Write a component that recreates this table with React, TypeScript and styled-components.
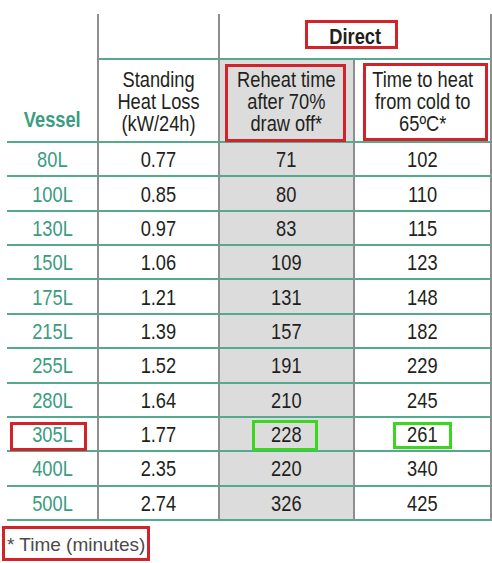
import React from "react";
import styled, { createGlobalStyle } from "styled-components";

const Global = createGlobalStyle`
  html, body { margin: 0; padding: 0; background: #ffffff; }
  body { font-family: "Liberation Sans", Arial, sans-serif; color: #231f20; }
`;

const LINE = "#55a98f";
const TEAL = "#3a9c80";
const GREYLINE = "#8e8e8e";
const SHADE = "#dcdcdc";
const RED = "#d2232a";
const LIME = "#3bd61f";

const Page = styled.div`
  padding: 14px 0 0 7px;
  width: 485px;
`;

const Table = styled.table`
  border-collapse: separate;
  border-spacing: 0;
  table-layout: fixed;
  width: 485px;
  font-size: 22px;
`;

const Cell = styled.td<{ $shade?: boolean; $teal?: boolean }>`
  position: relative;
  box-sizing: border-box;
  padding: 0;
  text-align: center;
  vertical-align: middle;
  line-height: 22px;
  font-weight: normal;
  background: ${(p) => (p.$shade ? SHADE : "transparent")};
  border-right: 2px solid ${GREYLINE};
  border-bottom: 2px solid ${LINE};
  color: ${(p) => (p.$teal ? TEAL : "#231f20")};
`;

const BodyCell = styled(Cell)`
  padding-top: 2px;
`;

const HeadCell = styled(Cell)`
  padding-top: 3px;
`;

const VesselHead = styled(Cell)`
  vertical-align: bottom;
  padding-bottom: 10px;
  font-weight: bold;
  color: ${TEAL};
`;

const DirectHead = styled(Cell)`
  font-weight: bold;
  padding-top: 2px;
`;

const Mark = styled.span<{ $color: string; $t: number; $r: number; $b: number; $l: number }>`
  position: absolute;
  top: ${(p) => p.$t}px;
  right: ${(p) => p.$r}px;
  bottom: ${(p) => p.$b}px;
  left: ${(p) => p.$l}px;
  border: 3px solid ${(p) => p.$color};
  pointer-events: none;
`;

const Label = styled.span`
  position: relative;
  display: inline-block;
  transform: scaleX(0.83);
  transform-origin: center;
  white-space: nowrap;
`;

const Footer = styled.div`
  margin: 5px 0 0 -5px;
  display: inline-block;
  box-sizing: border-box;
  height: 35px;
  padding: 0 2px 0 2px;
  border: 3px solid ${RED};
  font-size: 19px;
  line-height: 31px;
  color: #4a4a4a;
  white-space: nowrap;
`;

type Row = [string, string, string, string];

const rows: Row[] = [
  ["80L", "0.77", "71", "102"],
  ["100L", "0.85", "80", "110"],
  ["130L", "0.97", "83", "115"],
  ["150L", "1.06", "109", "123"],
  ["175L", "1.21", "131", "148"],
  ["215L", "1.39", "157", "182"],
  ["255L", "1.52", "191", "229"],
  ["280L", "1.64", "210", "245"],
  ["305L", "1.77", "228", "261"],
  ["400L", "2.35", "220", "340"],
  ["500L", "2.74", "326", "425"],
];

export default function App() {
  return (
    <>
      <Global />
      <Page>
        <Table>
          <colgroup>
            <col style={{ width: 92 }} />
            <col style={{ width: 121 }} />
            <col style={{ width: 135 }} />
            <col style={{ width: 137 }} />
          </colgroup>
          <thead>
            <tr style={{ height: 46 }}>
              <VesselHead as="th" rowSpan={2}>
                <Label>Vessel</Label>
              </VesselHead>
              <Cell as="th" />
              <DirectHead as="th" colSpan={2}>
                <Mark $color={RED} $t={6} $r={92} $b={9} $l={85} />
                <Label>Direct</Label>
              </DirectHead>
            </tr>
            <tr style={{ height: 83 }}>
              <HeadCell as="th">
                <Label>
                  Standing
                  <br />
                  Heat Loss
                  <br />
                  (kW/24h)
                </Label>
              </HeadCell>
              <HeadCell as="th" $shade>
                <Mark $color={RED} $t={4} $r={7} $b={-1} $l={5} />
                <Label>
                  Reheat time
                  <br />
                  after 70%
                  <br />
                  draw off*
                </Label>
              </HeadCell>
              <HeadCell as="th">
                <Mark $color={RED} $t={3} $r={2} $b={0} $l={8} />
                <Label>
                  Time to heat
                  <br />
                  from cold to
                  <br />
                  65ºC*
                </Label>
              </HeadCell>
            </tr>
          </thead>
          <tbody>
            {rows.map((r) => {
              const hl = r[0] === "305L";
              return (
                <tr key={r[0]} style={{ height: 34.36 }}>
                  <BodyCell $teal>
                    {hl && <Mark $color={RED} $t={4} $r={10} $b={-1} $l={3} />}
                    <Label>{r[0]}</Label>
                  </BodyCell>
                  <BodyCell>
                    <Label>{r[1]}</Label>
                  </BodyCell>
                  <BodyCell $shade>
                    {hl && <Mark $color={LIME} $t={2} $r={35} $b={-1} $l={32} />}
                    <Label>{r[2]}</Label>
                  </BodyCell>
                  <BodyCell>
                    {hl && <Mark $color={LIME} $t={4} $r={38} $b={1} $l={38} />}
                    <Label>{r[3]}</Label>
                  </BodyCell>
                </tr>
              );
            })}
          </tbody>
        </Table>
        <Footer>* Time (minutes)</Footer>
      </Page>
    </>
  );
}
